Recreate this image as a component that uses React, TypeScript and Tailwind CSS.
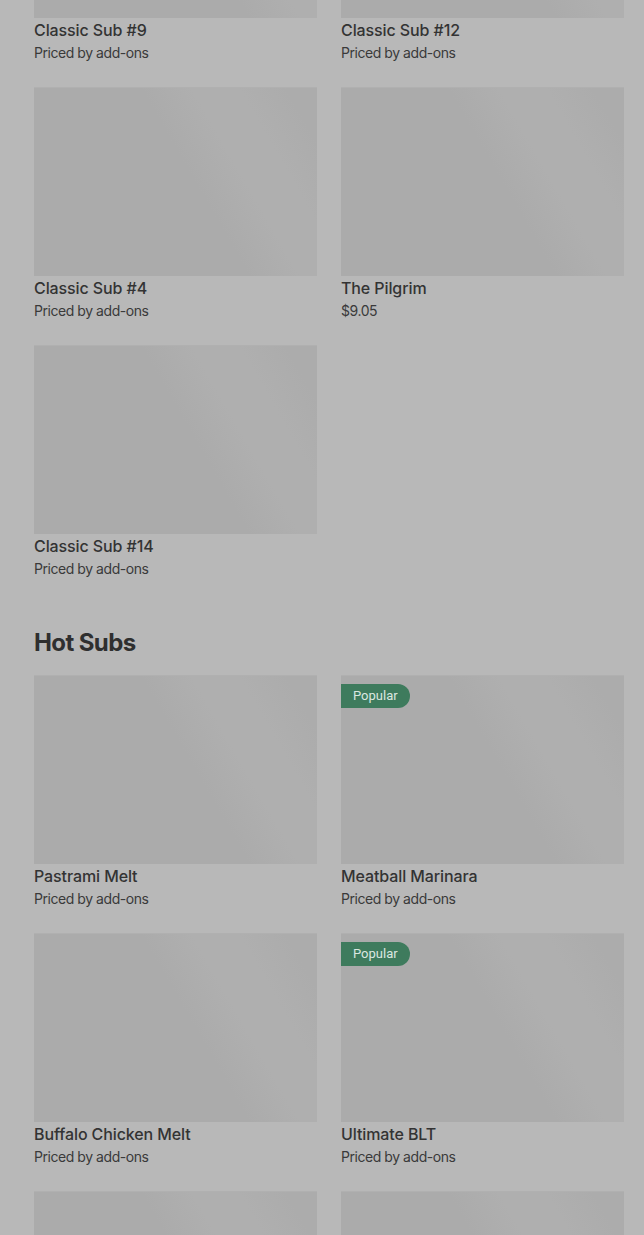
const classicSubs = [
  { name: 'Classic Sub #9', price: 'Priced by add-ons' },
  { name: 'Classic Sub #12', price: 'Priced by add-ons' },
  { name: 'Classic Sub #4', price: 'Priced by add-ons' },
  { name: 'The Pilgrim', price: '$9.05' },
  { name: 'Classic Sub #14', price: 'Priced by add-ons' },
];

const hotSubs = [
  { name: 'Pastrami Melt', price: 'Priced by add-ons' },
  { name: 'Meatball Marinara', price: 'Priced by add-ons', popular: true },
  { name: 'Buffalo Chicken Melt', price: 'Priced by add-ons' },
  { name: 'Ultimate BLT', price: 'Priced by add-ons', popular: true },
  // next row is only partly scrolled into view, captions below the fold
  { name: '', price: '' },
  { name: '', price: '' },
];

type Item = { name: string; price: string; popular?: boolean };

function ItemCard({ item }: { item: Item }) {
  return (
    <div className="pb-px">
      <div className="relative h-[188px] bg-[linear-gradient(60deg,#ababab_0%,#ababab_55%,#afafaf_68%,#afafaf_80%,#acacac_92%)] shadow-[0_-1px_0_#b0b0b0]">
        {item.popular && (
          <span className="absolute left-0 top-2 flex h-6 items-center rounded-r-full bg-[#3e7b5d] pl-3 pr-3 font-['Roboto',_sans-serif] text-[13px] text-[#dbe7e0]">
            Popular
          </span>
        )}
      </div>
      {item.name && (
        <>
          <div className="text-[16px] font-medium leading-6 tracking-[-0.1px] text-[#333333]">{item.name}</div>
          <div className="mt-px text-[14px] leading-5 tracking-[-0.45px] text-[#3a3a3a]">{item.price}</div>
        </>
      )}
    </div>
  );
}

export default function App() {
  return (
    <div className="h-screen overflow-hidden bg-[#b8b8b8] font-['Inter',_'Roboto',_sans-serif]">
      <div className="-mt-[170px] pl-[34px] pr-5">
        {/* Classic subs (scrolled) */}
        <div className="grid grid-cols-2 gap-x-6 gap-y-6">
          {classicSubs.map((item) => (
            <ItemCard key={item.name} item={item} />
          ))}
        </div>

        {/* Hot Subs */}
        <h2 className="mt-[47px] mb-[17px] text-[24px] font-bold leading-8 tracking-tight text-[#2f2f2f]">
          Hot Subs
        </h2>
        <div className="grid grid-cols-2 gap-x-6 gap-y-6">
          {hotSubs.map((item, i) => (
            <ItemCard key={i} item={item} />
          ))}
        </div>
      </div>
    </div>
  );
}
